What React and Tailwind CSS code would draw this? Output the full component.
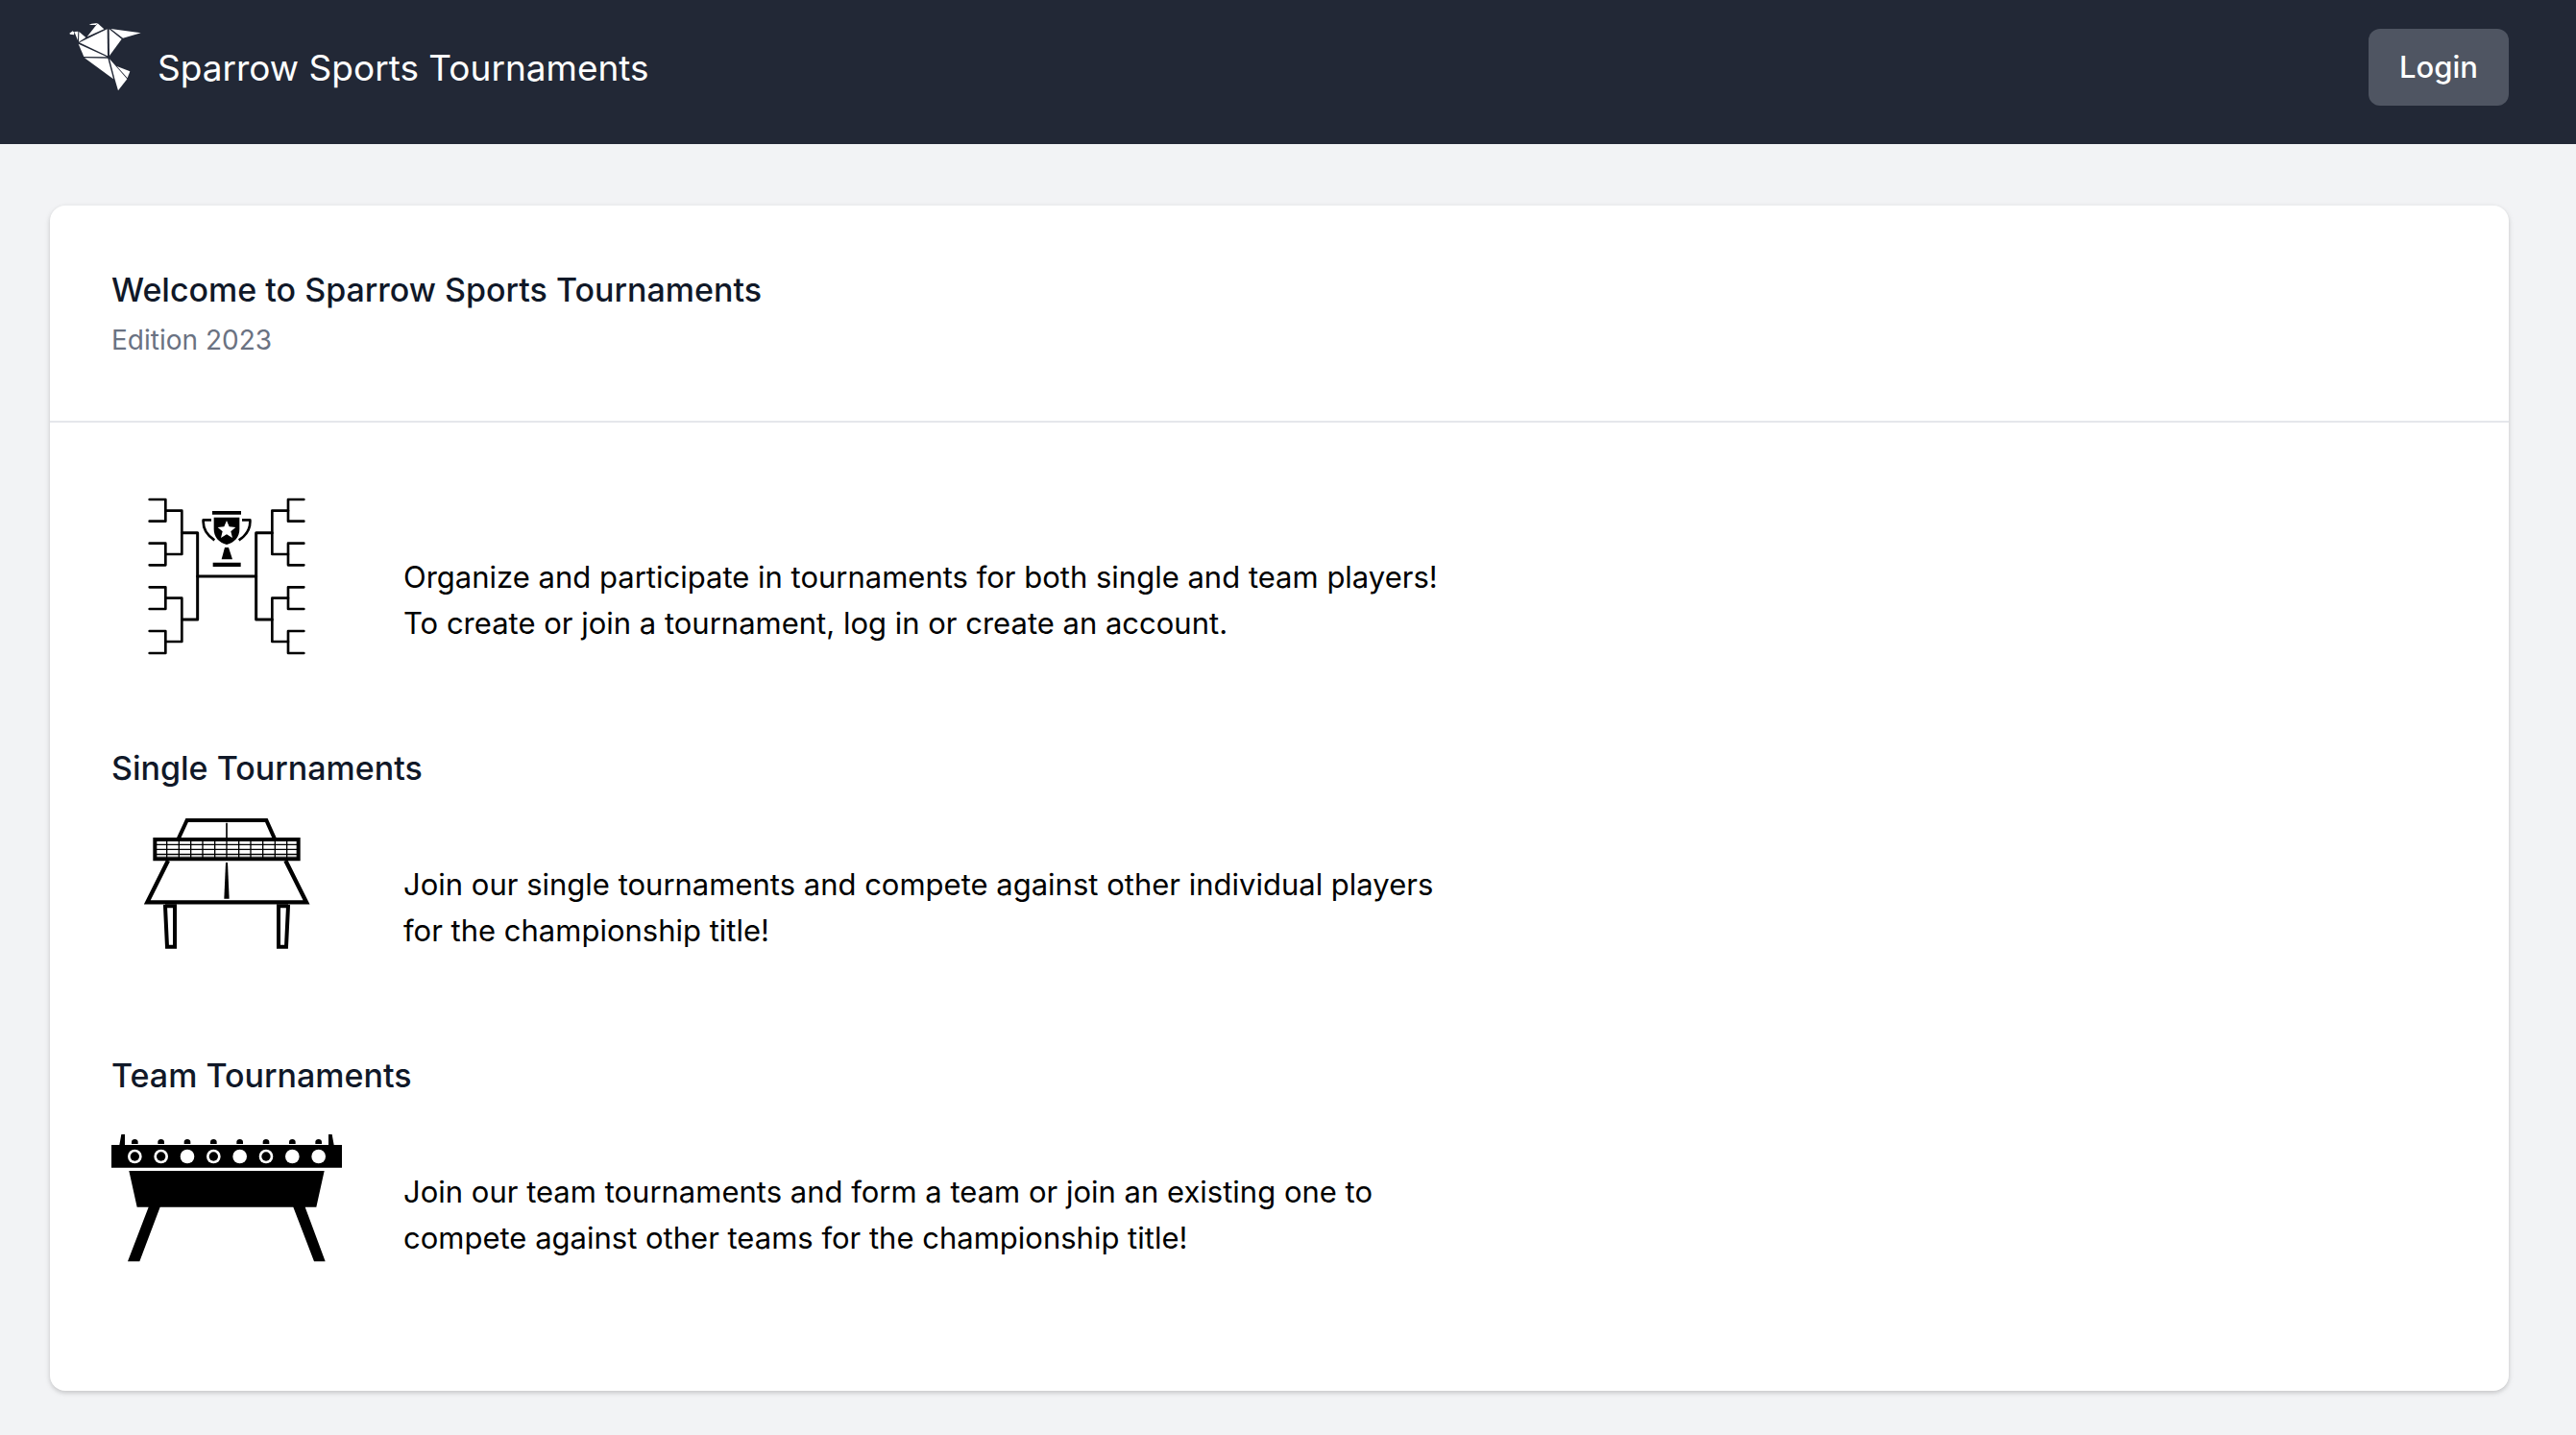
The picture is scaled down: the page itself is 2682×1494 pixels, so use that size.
function BirdLogo() {
  return (
    <svg viewBox="0 0 300 270" className="h-[90px] w-[100px] shrink-0" fill="#fff" aria-hidden="true">
      <path d="M37 62 L47 55 L52 59 L51 67 L39 65 Z" />
      <path d="M52 57 L64 56 L63 84 Z" />
      <path d="M67 57 L88 75 L66 89 Z" />
      <path d="M98 36 L106 32 L124 30 L120 36 Z" />
      <path d="M125 31 L145 49 L92 73 Z" />
      <path d="M68 91 L155 49 L156 133 Z" />
      <path d="M65 95 L154 136 L82 135 Z" />
      <path d="M161 49 L200 80 L162 132 Z" />
      <path d="M166 48 L260 61 L204 77 Z" />
      <path d="M84 139 L157 140 L174 205 Z" />
      <path d="M162 142 L217 205 L189 241 L178 203 Z" />
      <path d="M185 165 L226 181 L218 202 Z" />
    </svg>
  );
}

function BracketIcon() {
  return (
    <svg viewBox="-72 60 720 480" className="h-40 w-60 shrink-0 overflow-visible" aria-hidden="true">
      <g fill="none" stroke="#000" strokeWidth="8" strokeLinecap="round" strokeLinejoin="round">
        <path d="M47 60H97V128H47M47 197H97V265H47M47 334H97V402H47M47 471H97V540H47" />
        <path d="M97 95H148V231H97M97 368H148V504H97" />
        <path d="M148 164H197V435H148" strokeWidth="9" />
        <path d="M529 60H480V128H529M529 197H480V265H529M529 334H480V402H529M529 471H480V540H529" />
        <path d="M480 95H430V231H480M480 368H430V504H480" />
        <path d="M430 164H380V435H430" strokeWidth="9" />
        <path d="M197 300H380" strokeWidth="9" />
        <path d="M240 124H215C213 153 229 174 250 187M336 124H361C363 153 347 174 326 187" strokeLinecap="butt" strokeWidth="8" />
      </g>
      <path d="M243 96H333V107H243ZM245 257H332V270H245ZM282 210H294L306 247H272Z" />
      <path d="M248 116H328V152C328 177 313 194 288 201C263 194 248 177 248 152Z" />
      <path
        d="M288 126L296 145L316 147L301 160L306 180L288 169L270 180L275 160L260 147L280 145Z"
        fill="#fff"
      />
    </svg>
  );
}

function TableTennisIcon() {
  return (
    <svg viewBox="-42 30 720 480" className="h-40 w-60 shrink-0 overflow-visible" aria-hidden="true">
      <g fill="none" stroke="#000">
        <path d="M167 130L194 72H442L468 130" strokeWidth="12" />
        <path d="M94 132H542V193H94Z" strokeWidth="12" />
        <path d="M135 198L70 328H567L502 198" strokeWidth="13" />
        <path d="M126 336V340L132 467H156V340H126M510 336V340L504 467H480V340H510" strokeWidth="12" />
        <path d="M318 80V130" strokeWidth="5" />
        <path
          d="M131 136V190M169 136V190M206 136V190M243 136V190M281 136V190M318 136V190M356 136V190M393 136V190M431 136V190M469 136V190M506 136V190M98 148H538M98 163H538M98 178H538"
          strokeWidth="4"
        />
      </g>
      <path d="M98 181H538V187H98Z" fill="#000" fillOpacity="0.25" />
      <path d="M315 204H321L326 317H310Z" />
    </svg>
  );
}

const KNOBS = [
  { x: 121, ring: true },
  { x: 203, ring: true },
  { x: 285, ring: false },
  { x: 367, ring: true },
  { x: 449, ring: false },
  { x: 531, ring: true },
  { x: 613, ring: false },
  { x: 695, ring: false },
];

function FoosballIcon() {
  return (
    <svg viewBox="48 0 720 480" className="h-40 w-60 shrink-0 overflow-visible" aria-hidden="true">
      <path d="M48 96H73L79 63H90V96H726V63H737L743 96H768V167H48Z" />
      <path d="M103 177H713L688 290H653L716 460H681L616 290H200L136 460H99L164 290H128Z" />
      {KNOBS.map(({ x, ring }) => (
        <g key={x}>
          <path d={`M${x - 10} 93V86Q${x - 9} 78 ${x} 78Q${x + 9} 78 ${x + 10} 86V93Z`} />
          <circle cx={x} cy="132" r="22" fill="#fff" />
          {ring && <circle cx={x} cy="132" r="14" />}
        </g>
      ))}
    </svg>
  );
}

function Row({ icon, lines }) {
  return (
    <div className="flex items-center gap-16">
      {icon}
      <p className="mt-[50px] text-[31px] leading-[48px] text-black">
        {lines[0]}
        <br />
        {lines[1]}
      </p>
    </div>
  );
}

function Section({ title, icon, lines }) {
  return (
    <section className="mt-[100px]">
      <h2 className="mb-5 text-[34px] leading-10 font-medium text-gray-900">{title}</h2>
      <Row icon={icon} lines={lines} />
    </section>
  );
}

export default function App() {
  return (
    <div className="min-h-screen bg-[#f2f3f5] font-['Inter','Liberation_Sans',sans-serif]">
      <nav className="flex h-[150px] items-center justify-between bg-[#222836] pr-[70px] pl-[60px]">
        <a href="#" className="flex items-center gap-1 text-white">
          <div className="-mt-8">
            <BirdLogo />
          </div>
          <span className="-mt-2 text-[37px] leading-[56px]">Sparrow Sports Tournaments</span>
        </a>
        <button
          type="button"
          className="-mt-2.5 h-20 rounded-xl bg-[#4f5562] px-8 text-[31px] font-medium text-white"
        >
          Login
        </button>
      </nav>
      <main className="pt-16 pr-[70px] pb-[46px] pl-[52px]">
        <div className="rounded-2xl bg-white shadow-[0_2px_6px_rgba(0,0,0,0.1),0_2px_4px_rgba(0,0,0,0.1)]">
          <header className="border-b-2 border-gray-200 p-16">
            <h1 className="text-[34px] leading-12 font-medium text-gray-900">
              Welcome to Sparrow Sports Tournaments
            </h1>
            <p className="mt-2 text-[28px] leading-10 text-gray-500">Edition 2023</p>
          </header>
          <div className="px-16 pt-20 pb-32">
            <Row
              icon={<BracketIcon />}
              lines={[
                "Organize and participate in tournaments for both single and team players!",
                "To create or join a tournament, log in or create an account.",
              ]}
            />
            <Section
              title="Single Tournaments"
              icon={<TableTennisIcon />}
              lines={[
                "Join our single tournaments and compete against other individual players",
                "for the championship title!",
              ]}
            />
            <Section
              title="Team Tournaments"
              icon={<FoosballIcon />}
              lines={[
                "Join our team tournaments and form a team or join an existing one to",
                "compete against other teams for the championship title!",
              ]}
            />
          </div>
        </div>
      </main>
    </div>
  );
}
